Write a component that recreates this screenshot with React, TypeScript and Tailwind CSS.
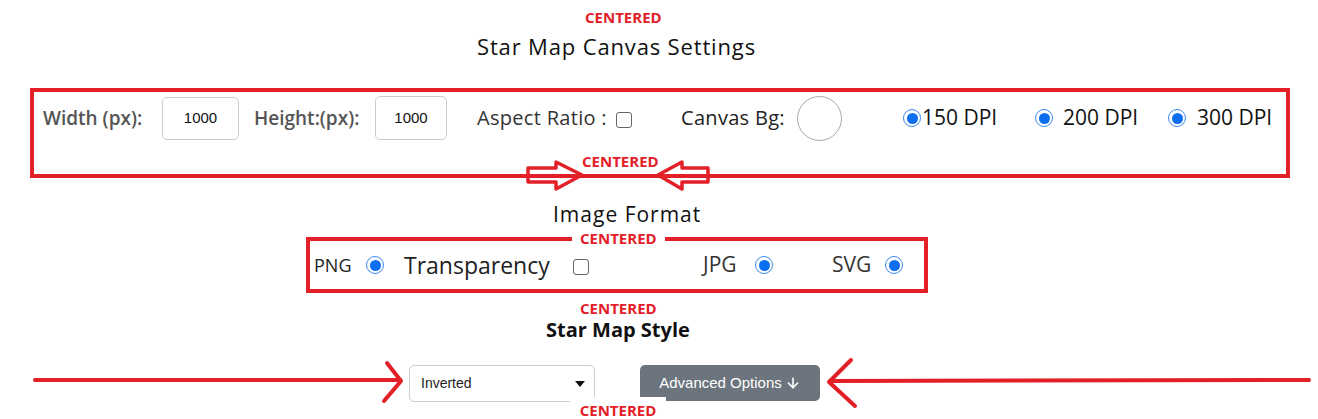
import { ArrowDown } from 'lucide-react';

const RED = 'text-[#e32028]';

function Radio() {
  return (
    <span className="flex h-[18px] w-[18px] shrink-0 items-center justify-center rounded-full border-[1.5px] border-[#3d8bef] bg-white">
      <span className="h-[11px] w-[11px] rounded-full bg-[#0b6ff0]" />
    </span>
  );
}

function Checkbox({ className = '' }: { className?: string }) {
  return <span className={`block h-[16px] w-[16px] shrink-0 rounded-[3px] border-[1.5px] border-[#666] bg-white ${className}`} />;
}

function Centered({ className = '' }: { className?: string }) {
  return <div className={`text-[15px] font-bold leading-[18px] ${RED} ${className}`}>CENTERED</div>;
}

export default function App() {
  return (
    <div className="relative h-[419px] w-[1318px] overflow-hidden bg-white font-['Open_Sans',sans-serif] text-[#111]">
      {/* Canvas settings */}
      <Centered className="pl-[585px] pt-[8px]" />
      <h2 className="mt-[5px] pl-[477px] text-[22px] leading-[30px] tracking-[0.85px] whitespace-nowrap">Star Map Canvas Settings</h2>

      <div className="mt-[27px] ml-[30px] h-[90px] w-[1260px] border-4 border-[#e32028]">
        <div className="flex h-[46px] items-center mt-[3px] whitespace-nowrap">
          <span className="ml-[9px] w-[105px] text-[19px] font-semibold text-[#555]">Width (px):</span>
          <div className="ml-[14px] flex h-[43px] w-[77px] items-center justify-center rounded-[5px] border border-[#ccc] font-['Liberation_Sans',sans-serif] text-[15px]">1000</div>
          <span className="ml-[15px] w-[112px] text-[19px] font-semibold text-[#555]">Height:(px):</span>
          <div className="ml-[9px] flex h-[44px] w-[72px] items-center justify-center rounded-[5px] border border-[#ccc] font-['Liberation_Sans',sans-serif] text-[15px]">1000</div>
          <span className="ml-[30px] w-[131px] text-[20px] tracking-[0.3px] text-[#333]">Aspect Ratio :</span>
          <Checkbox className="ml-[8px] mt-[3px]" />
          <span className="ml-[49px] w-[104px] text-[20px] tracking-[0.3px] text-[#222]">Canvas Bg:</span>
          <span className="ml-[12px] h-[45px] w-[45px] rounded-full border border-[#aaa] bg-white" />
          <span className="ml-[61px]"><Radio /></span>
          <span className="ml-[1px] w-[78px] text-[21px]">150 DPI</span>
          <span className="ml-[35px]"><Radio /></span>
          <span className="ml-[10px] w-[76px] text-[21px]">200 DPI</span>
          <span className="ml-[29px]"><Radio /></span>
          <span className="ml-[11px] w-[75px] text-[21px]">300 DPI</span>
        </div>
        <Centered className="ml-[548px] mt-[11px]" />
      </div>

      {/* Image format */}
      <h2 className="mt-[22px] pl-[553px] text-[21px] leading-[28px] tracking-[1px] whitespace-nowrap">Image Format</h2>

      <div className="relative mt-[9px] ml-[306px] h-[56px] w-[622px] border-4 border-[#e32028]">
        <Centered className="absolute -top-[12px] left-[262px] bg-white px-[8px]" />
        <div className="flex h-full items-center whitespace-nowrap text-[#222]">
          <span className="ml-[4px] w-[42px] text-[18px]">PNG</span>
          <span className="ml-[10px]"><Radio /></span>
          <span className="ml-[20px] w-[155px] text-[23px]">Transparency</span>
          <Checkbox className="ml-[14px] mt-[4px]" />
          <span className="ml-[114px] w-[38px] text-[21px] text-[#333]">JPG</span>
          <span className="ml-[14px]"><Radio /></span>
          <span className="ml-[59px] w-[43px] text-[21px] text-[#333]">SVG</span>
          <span className="ml-[10px]"><Radio /></span>
        </div>
      </div>

      {/* Style */}
      <Centered className="mt-[6px] pl-[580px]" />
      <h2 className="mt-[2px] pl-[546px] text-[20px] font-bold leading-[22px] whitespace-nowrap">Star Map Style</h2>

      <div className="mt-[24px] flex items-start pl-[409px] font-['Liberation_Sans',sans-serif]">
        <div className="flex h-[37px] w-[186px] items-center justify-between rounded-[5px] border border-[#ccc] pl-[11px] pr-[9px] text-[14px] text-[#222]">
          <span>Inverted</span>
          <span className="h-0 w-0 border-x-[5px] border-t-[6px] border-x-transparent border-t-[#111]" />
        </div>
        <button className="ml-[45px] flex h-[36px] w-[180px] items-center justify-center gap-[3px] rounded-[5px] bg-[#6c757d] text-[15px] text-white">
          Advanced Options
          <ArrowDown size={16} strokeWidth={2.4} />
        </button>
      </div>
      <Centered className="relative -mt-[5px] ml-[570px] w-[96px] bg-white pt-[4px] text-center" />

      {/* annotation arrows */}
      <svg className="pointer-events-none absolute inset-0" width="1318" height="419" viewBox="0 0 1318 419" fill="none" stroke="#e32028" strokeLinecap="round" strokeLinejoin="round">
        <polygon points="528,168 556,168 556,162 582,175 556,189 556,182 528,182" strokeWidth="3.5" />
        <polygon points="708,168 682,168 682,162 658,175 682,189 682,182 708,182" strokeWidth="3.5" />
        <line x1="35" y1="380" x2="400" y2="380" strokeWidth="4" />
        <polyline points="387,363 401,381 384,401" strokeWidth="4" />
        <line x1="830" y1="381" x2="1309" y2="380" strokeWidth="4" />
        <polyline points="851,360 829,382 855,406" strokeWidth="4" />
      </svg>
    </div>
  );
}
